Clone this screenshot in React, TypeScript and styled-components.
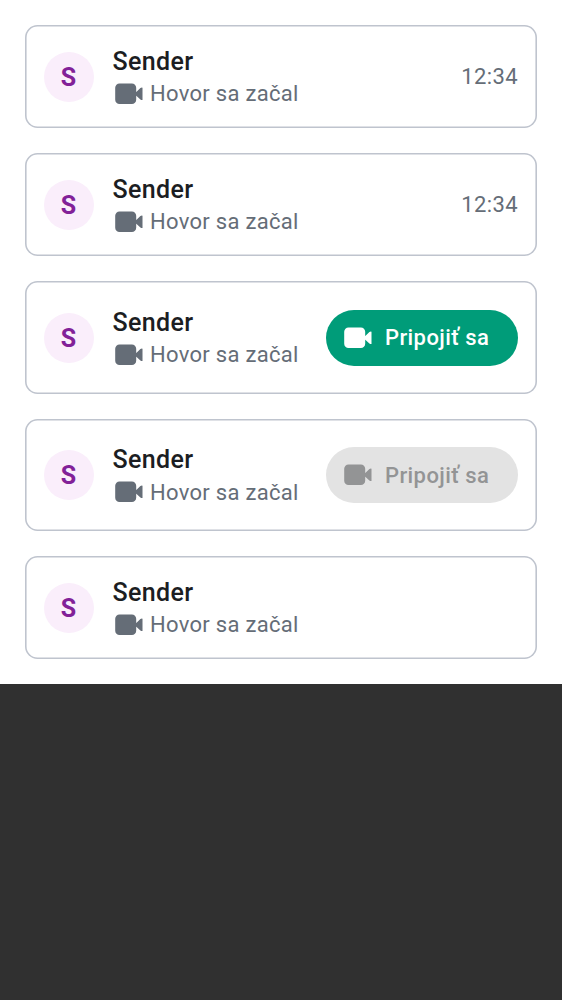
import React from "react";
import styled, { createGlobalStyle } from "styled-components";

const GlobalStyle = createGlobalStyle`
  body { margin: 0; background: #303030; font-family: Roboto, "Liberation Sans", sans-serif; }
`;

const List = styled.main`
  display: flex;
  flex-direction: column;
  gap: 25.1px;
  box-sizing: border-box;
  height: 684.4px;
  padding: 25px;
  background: #fff;
`;

const Card = styled.article<{ $height: number }>`
  display: flex;
  align-items: center;
  box-sizing: border-box;
  flex: none;
  height: ${(p) => p.$height}px;
  padding: 0 19px 0 18.5px;
  border-radius: 12.5px;
  box-shadow: inset 0 0 0 1.6px #bfc4ce;
`;

const Avatar = styled.div`
  display: flex;
  align-items: center;
  justify-content: center;
  box-sizing: border-box;
  width: 50px;
  height: 50px;
  padding-top: 1.4px;
  margin-right: 19px;
  border-radius: 50%;
  background: #faeefb;
  color: #822198;
  font-size: 25px;
  font-weight: 700;
`;

const Body = styled.div`
  display: flex;
  flex-direction: column;
  flex: 1;
  padding-bottom: 3px;
`;

const Name = styled.div`
  height: 37px;
  line-height: 37px;
  color: #1b1d22;
  font-size: 25px;
  font-weight: 500;
  letter-spacing: 0.35px;
  white-space: nowrap;
`;

const Status = styled.div`
  display: flex;
  align-items: center;
  gap: 6.5px;
  height: 28px;
  padding-left: 2px;
  color: #656d77;
  font-size: 22px;
  letter-spacing: 0.3px;
  white-space: nowrap;
`;

const Time = styled.time`
  color: #656d77;
  font-size: 22px;
  letter-spacing: 0.4px;
`;

const JoinButton = styled.button`
  display: flex;
  align-items: center;
  gap: 12.4px;
  width: 192.4px;
  height: 56.2px;
  padding: 0 0 0 18px;
  border: 0;
  border-radius: 28.1px;
  background: #009c79;
  color: #fff;
  font: 500 22px Roboto, "Liberation Sans", sans-serif;
  letter-spacing: 0.4px;
  white-space: nowrap;
  &:disabled { background: #e3e3e3; color: #939495; }
`;

const Camera = () => (
  <svg width="29" height="22" viewBox="0 0 29 22" fill="currentColor">
    <path d="M4.5 .5h12.4a4.3 4.3 0 0 1 4.3 4.3v12a4.3 4.3 0 0 1-4.3 4.3H4.5A4.3 4.3 0 0 1 .2 16.8v-12A4.3 4.3 0 0 1 4.5 .5ZM21 9.3l4.4-4.2q1.2-.8 2.1-.4v12.2q-.9.4-2.1-.4L21 12.5Z" />
  </svg>
);

type Call = { height: number; time?: string; join?: "active" | "disabled" };

const calls: Call[] = [
  { height: 103, time: "12:34" },
  { height: 103, time: "12:34" },
  { height: 112.9, join: "active" },
  { height: 112.2, join: "disabled" },
  { height: 103 },
];

export default function App() {
  return (
    <>
      <GlobalStyle />
      <List>
        {calls.map((call, i) => (
          <Card key={i} $height={call.height}>
            <Avatar>S</Avatar>
            <Body>
              <Name>Sender</Name>
              <Status><Camera />Hovor sa začal</Status>
            </Body>
            {call.time && <Time>{call.time}</Time>}
            {call.join && (
              <JoinButton disabled={call.join === "disabled"}><Camera />Pripojiť sa</JoinButton>
            )}
          </Card>
        ))}
      </List>
    </>
  );
}
